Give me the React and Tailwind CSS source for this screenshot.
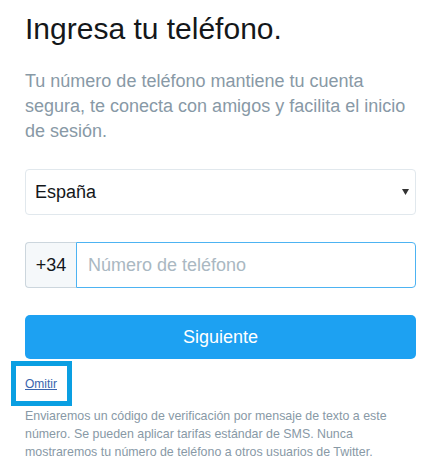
import React from "react";

export default function App() {
    return (
        <div className="w-[426px] h-[471px] overflow-hidden bg-white font-['Liberation_Sans',Arial,sans-serif]">
            <div className="pl-[25px] pr-[10px] pt-[11px]">
                <h1 className="text-[30px] leading-[36px] font-normal text-[#14171a]">
                    Ingresa tu teléfono.
                </h1>
                <p className="mt-[22px] text-[18px] leading-[25px] text-[#8899a6]">
                    Tu número de teléfono mantiene tu cuenta segura, te conecta con amigos y facilita el inicio de sesión.
                </p>

                {/* selector de país */}
                <div className="mt-[25px] h-[46px] flex items-center justify-between border border-[#e1e8ed] rounded-[4px] pl-[9px] pr-[6px]">
                    <span className="text-[18px] text-[#14171a]">España</span>
                    <svg width="7" height="6" viewBox="0 0 7 6">
                        <path d="M0 0 L7 0 L3.5 6 Z" fill="#333" />
                    </svg>
                </div>

                {/* teléfono */}
                <div className="mt-[27px] h-[46px] flex">
                    <div className="w-[51px] flex items-center justify-center bg-[#f5f8fa] border border-[#ccd6dd] border-r-0 rounded-l-[4px] text-[18px] text-[#14171a]">
                        +34
                    </div>
                    <input
                        type="tel"
                        placeholder="Número de teléfono"
                        className="flex-1 min-w-0 border border-[#4db3f2] rounded-r-[4px] pl-[11px] text-[18px] text-[#14171a] placeholder:text-[#aab8c2] outline-none"
                    />
                </div>

                <button className="mt-[27px] w-full h-[44px] bg-[#1da1f2] rounded-[5px] text-white text-[18px]">
                    Siguiente
                </button>

                <div className="mt-[2px] -ml-[14px] w-fit border-[5px] border-[#0a9fe2] pl-[9px] pr-[10px] pt-[9px] pb-[8px]">
                    <a href="#" className="block text-[12px] leading-[18px] text-[#3a65ad] underline">
                        Omitir
                    </a>
                </div>

                <p className="mt-[1px] text-[12.4px] leading-[18px] text-[#8899a6]">
                    Enviaremos un código de verificación por mensaje de texto a este número. Se pueden aplicar tarifas estándar de SMS. Nunca mostraremos tu número de teléfono a otros usuarios de Twitter.
                </p>
            </div>
        </div>
    );
}
